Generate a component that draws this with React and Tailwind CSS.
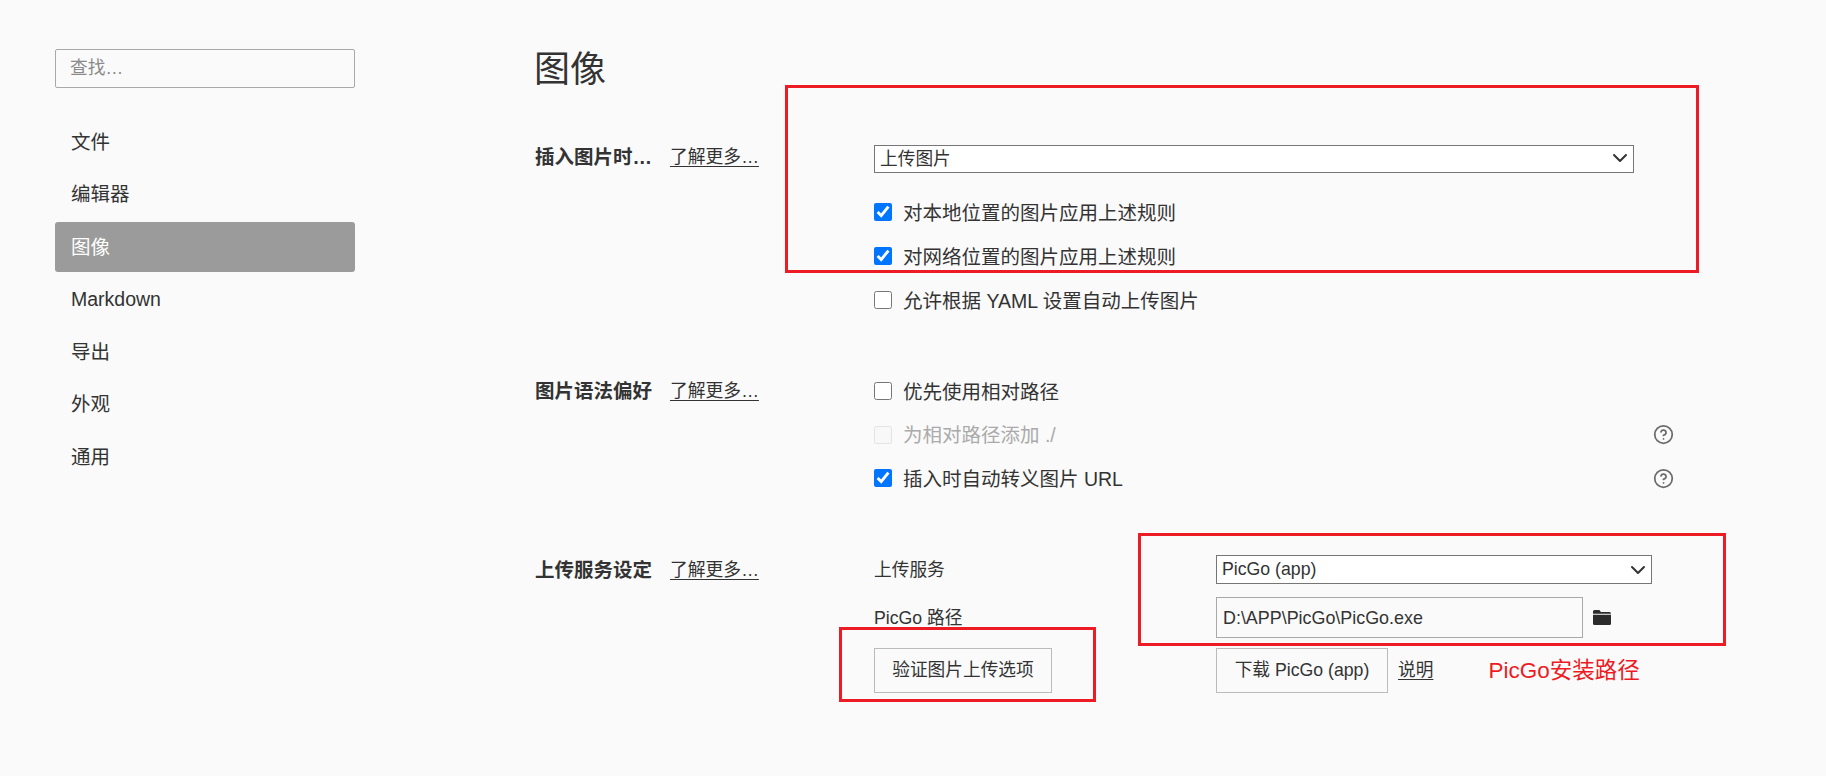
import { CircleHelp, ChevronDown } from "lucide-react";

const navItems = ["文件", "编辑器", "图像", "Markdown", "导出", "外观", "通用"];

const LearnMore = () => (
  <a className="text-[17.8px] underline underline-offset-[3px] text-[#333] cursor-pointer">了解更多…</a>
);

const SectionLabel = ({ title, className = "" }) => (
  <div className={`flex w-[339px] shrink-0 leading-[28px] ${className}`}>
    <span className="w-[135px] font-bold">{title}</span>
    <LearnMore />
  </div>
);

const CheckRow = ({ label, checked, disabled, help }) => (
  <div className="flex items-center h-[28px] w-[800px]">
    <input
      type="checkbox"
      defaultChecked={checked}
      disabled={disabled}
      className={`w-[18px] h-[18px] m-0 accent-[#0075ff] ${disabled ? "opacity-50" : ""}`}
    />
    <span className={`ml-[11px] pt-[3px] ${disabled ? "text-[#aaa]" : ""}`}>{label}</span>
    {help && <CircleHelp size={21} strokeWidth={2} className="ml-auto text-[#6b6b6b]" />}
  </div>
);

const Select = ({ value, className }) => (
  <div className={`relative ${className}`}>
    <select
      defaultValue={value}
      className="w-full h-full appearance-none bg-white border border-[#767676] pl-[5px] pb-[3px] text-[17.7px] outline-none"
    >
      <option>{value}</option>
    </select>
    <ChevronDown size={24} strokeWidth={2} className="absolute right-[2px] top-1/2 -translate-y-1/2 text-[#333] pointer-events-none" />
  </div>
);

const Annotation = ({ className }) => (
  <div className={`absolute border-[3px] border-[#ed1c24] pointer-events-none ${className}`} />
);

const App = () => {
  return (
    <div className="relative flex h-[776px] bg-[#fafafa] text-[#333] text-[19.5px] font-['Liberation_Sans','Noto_Sans_CJK_SC',sans-serif] overflow-hidden">
      {/* Sidebar */}
      <div className="w-[300px] ml-[55px] pt-[49px] shrink-0">
        <input
          placeholder="查找…"
          className="w-full h-[39px] px-[14px] text-[17.7px] bg-[#fafafa] border border-[#a9a9a9] rounded-[2px] outline-none placeholder:text-[#8a8a8a]"
        />
        <div className="flex flex-col gap-[3px] mt-[29px]">
          {navItems.map((item) => (
            <div
              key={item}
              className={`flex items-center h-[49.5px] px-[16px] pt-[1px] rounded-[3px] ${
                item === "图像" ? "bg-[#9b9b9b] text-white" : ""
              }`}
            >
              {item}
            </div>
          ))}
        </div>
      </div>

      {/* Main settings */}
      <div className="ml-[180px] pt-[48px]">
        <h1 className="text-[36px] leading-[40px] pt-[2px] -ml-[1px] h-[40px] font-normal">图像</h1>

        <div className="flex mt-[56px]">
          <SectionLabel title="插入图片时…" className="-mt-[1px]" />
          <div className="flex flex-col">
            <Select value="上传图片" className="w-[760px] h-[28px]" />
            <div className="flex flex-col gap-4 mt-[26px]">
              <CheckRow label="对本地位置的图片应用上述规则" checked />
              <CheckRow label="对网络位置的图片应用上述规则" checked />
              <CheckRow label="允许根据 YAML 设置自动上传图片" />
            </div>
          </div>
        </div>

        <div className="flex mt-[63px]">
          <SectionLabel title="图片语法偏好" />
          <div className="flex flex-col gap-[15.5px]">
            <CheckRow label="优先使用相对路径" />
            <CheckRow label="为相对路径添加 ./" disabled help />
            <CheckRow label="插入时自动转义图片 URL" checked help />
          </div>
        </div>

        <div className="flex mt-[63px]">
          <SectionLabel title="上传服务设定" className="pt-[1px]" />
          <div className="flex flex-col text-[17.7px]">
            <div className="flex items-center h-[29px]">
              <span className="w-[342px] pt-[2px]">上传服务</span>
              <Select value="PicGo (app)" className="w-[436px] h-[29px]" />
            </div>
            <div className="flex items-center h-[41px] mt-[13px]">
              <span className="w-[342px] pt-[2px]">PicGo 路径</span>
              <input
                readOnly
                value="D:\APP\PicGo\PicGo.exe"
                className="w-[367px] h-[41px] px-[6px] pt-[2px] text-[17.9px] bg-[#fafafa] border border-[#a9a9a9] outline-none"
              />
              <svg viewBox="0 0 24 20" className="w-[18px] h-[15px] ml-[10px] fill-[#2b2b2b]">
                <path d="M2 0h6.5l2 2.5H22a2 2 0 0 1 2 2V5H0V2a2 2 0 0 1 2-2z" />
                <path d="M0 6.2h24V18a2 2 0 0 1-2 2H2a2 2 0 0 1-2-2z" />
              </svg>
            </div>
            <div className="flex items-center h-[45px] mt-[10px]">
              <div className="w-[342px]">
                <button className="w-[178px] h-[45px] border border-[#bbb] bg-[#fafafa]">验证图片上传选项</button>
              </div>
              <button className="w-[172px] h-[45px] border border-[#bbb] bg-[#fafafa]">下载 PicGo (app)</button>
              <a className="ml-[10px] underline underline-offset-[3px]">说明</a>
              <span className="ml-[55px] text-[22.5px] text-[#ed1c24]">PicGo安装路径</span>
            </div>
          </div>
        </div>
      </div>

      {/* Red markup drawn over the screenshot */}
      <Annotation className="left-[785px] top-[85px] w-[914px] h-[188px]" />
      <Annotation className="left-[1138px] top-[533px] w-[588px] h-[113px]" />
      <Annotation className="left-[839px] top-[627px] w-[257px] h-[75px]" />
    </div>
  );
};

export default App;
